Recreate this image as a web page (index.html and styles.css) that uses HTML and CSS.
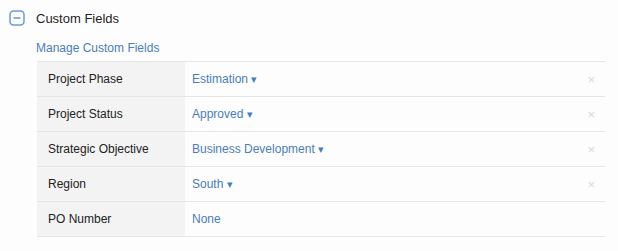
FILE: index.html
```html
<!DOCTYPE html>
<html>
<head>
    <meta charset="UTF-8" />
    <title>Custom Fields</title>
    <link rel="stylesheet" href="styles.css">
</head>
<body>
    <div class="section">
        <div class="head">
            <svg class="toggle" width="16" height="16" viewBox="0 0 16 16">
                <rect x="1" y="1" width="14" height="14" rx="3.5" fill="none" stroke="#6d9bd6" stroke-width="1.5"/>
                <line x1="4.5" y1="8" x2="11.5" y2="8" stroke="#6d9bd6" stroke-width="1.6"/>
            </svg>
            <span class="title">Custom Fields</span>
        </div>
        <a class="manage" href="#">Manage Custom Fields</a>

        <div class="fields">
            <div class="row">
                <div class="label">Project Phase</div>
                <div class="value"><a href="#">Estimation <span class="caret">&#9662;</span></a></div>
                <div class="remove">&times;</div>
            </div>
            <div class="row">
                <div class="label">Project Status</div>
                <div class="value"><a href="#">Approved <span class="caret">&#9662;</span></a></div>
                <div class="remove">&times;</div>
            </div>
            <div class="row">
                <div class="label">Strategic Objective</div>
                <div class="value"><a href="#">Business Development <span class="caret">&#9662;</span></a></div>
                <div class="remove">&times;</div>
            </div>
            <div class="row">
                <div class="label">Region</div>
                <div class="value"><a href="#">South <span class="caret">&#9662;</span></a></div>
                <div class="remove">&times;</div>
            </div>
            <div class="row">
                <div class="label">PO Number</div>
                <div class="value"><a href="#">None</a></div>
                <div class="remove"></div>
            </div>
        </div>
    </div>
</body>
</html>
```

FILE: styles.css
```css
body {
    margin: 0;
    background: #fdfdfd;
    font-family: "Liberation Sans", Arial, sans-serif;
    color: #222;
}

.section {
    padding: 9px 13px 0 9px;
}

.head {
    display: flex;
    align-items: center;
    height: 18px;
}

.toggle {
    margin-right: 11px;
}

.title {
    font-size: 13px;
    color: #1e1e1e;
}

.manage {
    display: block;
    margin: 14px 0 0 27px;
    font-size: 12px;
    line-height: 15px;
    color: #4a7db8;
    text-decoration: none;
}

.fields {
    margin: 5px 0 0 28px;
    border-top: 1px solid #e6e6e6;
}

.row {
    display: grid;
    grid-template-columns: 148px 1fr 30px;
    height: 34px;
    border-bottom: 1px solid #e6e6e6;
    align-items: center;
    font-size: 12px;
}

.label {
    height: 100%;
    display: flex;
    align-items: center;
    padding-left: 11px;
    background: #f3f3f3;
    color: #222;
}

.value {
    padding-left: 7px;
}

.value a {
    color: #4a7db8;
    text-decoration: none;
}

.caret {
    font-size: 11px;
}

.remove {
    color: #d3d9e1;
    font-size: 13px;
    text-align: right;
    padding-right: 10px;
}
```
